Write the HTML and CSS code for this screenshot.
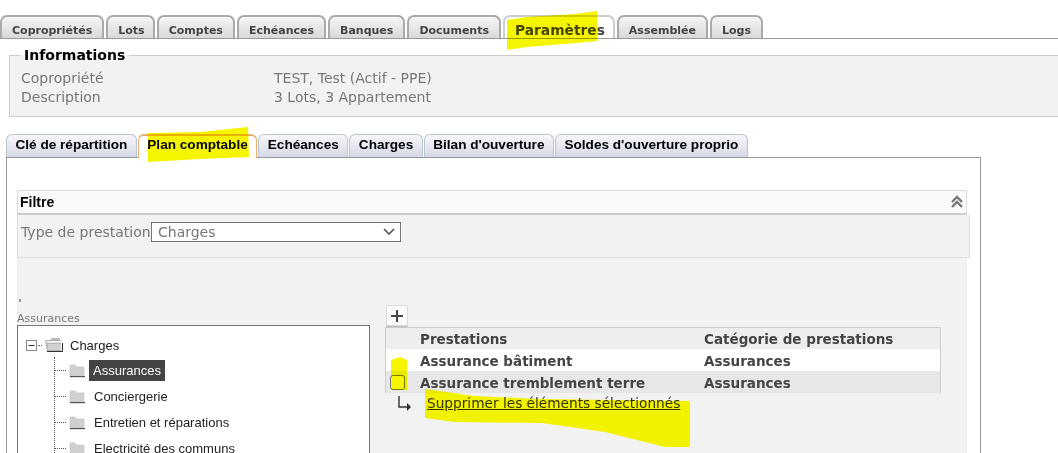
FILE: index.html
```html
<!DOCTYPE html>
<html lang="fr">
<head>
<meta charset="utf-8">
<title>Paramètres</title>
<link rel="stylesheet" href="styles.css">
</head>
<body>
<nav class="main-tabs">
  <a class="mt">Copropriétés</a>
  <a class="mt mt-short">Lots</a>
  <a class="mt">Comptes</a>
  <a class="mt">Echéances</a>
  <a class="mt">Banques</a>
  <a class="mt">Documents</a>
  <a class="mt mt-active">Paramètres</a>
  <a class="mt">Assemblée</a>
  <a class="mt">Logs</a>
</nav>
<fieldset class="info">
  <legend>Informations</legend>
  <div class="info-row"><span class="info-key">Copropriété</span><span>TEST, Test (Actif - PPE)</span></div>
  <div class="info-row"><span class="info-key">Description</span><span>3 Lots, 3 Appartement</span></div>
</fieldset>
<nav class="sub-tabs">
  <a class="st">Clé de répartition</a>
  <a class="st st-active">Plan comptable</a>
  <a class="st">Echéances</a>
  <a class="st">Charges</a>
  <a class="st">Bilan d'ouverture</a>
  <a class="st">Soldes d'ouverture proprio</a>
</nav>
<main class="panel">
  <div class="filter-head">
    <span>Filtre</span>
    <svg class="chev" width="14" height="14" viewBox="0 0 14 14"><path d="M2 7l5-5 5 5M2 12l5-5 5 5" fill="none" stroke="#777" stroke-width="2.4"/></svg>
  </div>
  <div class="filter-body">
    <label class="filter-label">Type de prestation</label>
    <div class="select"><span>Charges</span>
      <svg width="12" height="8" viewBox="0 0 12 8"><path d="M1 1l5 5 5-5" fill="none" stroke="#555" stroke-width="1.6"/></svg>
    </div>
  </div>
  <div class="work">
    <div class="dot"></div>
    <div class="columns">
      <section class="tree-col">
        <div class="tree-label">Assurances</div>
        <div class="tree">
          <div class="node root">
            <svg class="expander" width="11" height="11" viewBox="0 0 11 11"><rect x=".5" y=".5" width="10" height="10" fill="#fff" stroke="#888"/><path d="M2.5 5.5h6" stroke="#333"/></svg>
            <span class="root-dash"></span>
            <svg class="open-folder" width="20" height="16" viewBox="0 0 20 16"><path d="M1 3h5l2-2h7l2 3v10H3z" fill="#b5b5b5"/><path d="M1 4h16v2H4z" fill="#eee"/><path d="M3 14h15V6h1v9H3z" fill="#333"/><path d="M4 7h13v6H4z" fill="#d2d2d2"/></svg>
            <span class="root-name">Charges</span>
          </div>
          <ul class="children">
            <li class="node"><span class="dash"></span><svg class="folder" width="16" height="15" viewBox="0 0 16 15"><path d="M1 2h5l1 2h8v9H1z" fill="#d0d0d0" stroke="#c0c0c0" stroke-width=".6"/><path d="M1 13h15v1.2H1z" fill="#555"/></svg><span class="name selected">Assurances</span></li>
            <li class="node"><span class="dash"></span><svg class="folder" width="16" height="15" viewBox="0 0 16 15"><path d="M1 2h5l1 2h8v9H1z" fill="#d0d0d0" stroke="#c0c0c0" stroke-width=".6"/><path d="M1 13h15v1.2H1z" fill="#555"/></svg><span class="name">Conciergerie</span></li>
            <li class="node"><span class="dash"></span><svg class="folder" width="16" height="15" viewBox="0 0 16 15"><path d="M1 2h5l1 2h8v9H1z" fill="#d0d0d0" stroke="#c0c0c0" stroke-width=".6"/><path d="M1 13h15v1.2H1z" fill="#555"/></svg><span class="name">Entretien et réparations</span></li>
            <li class="node"><span class="dash"></span><svg class="folder" width="16" height="15" viewBox="0 0 16 15"><path d="M1 2h5l1 2h8v9H1z" fill="#d0d0d0" stroke="#c0c0c0" stroke-width=".6"/><path d="M1 13h15v1.2H1z" fill="#555"/></svg><span class="name">Electricité des communs</span></li>
          </ul>
        </div>
      </section>
      <section class="list-col">
        <button class="add"><svg width="14" height="14" viewBox="0 0 14 14"><path d="M7 1v12M1 7h12" stroke="#444" stroke-width="2"/></svg></button>
        <div class="grid">
          <div class="grow ghead"><span class="gcheck"></span><span class="gc1">Prestations</span><span>Catégorie de prestations</span></div>
          <div class="grow gwhite"><span class="gcheck"></span><span class="gc1">Assurance bâtiment</span><span>Assurances</span></div>
          <div class="grow ggrey"><span class="gcheck"><span class="box"></span></span><span class="gc1">Assurance tremblement terre</span><span>Assurances</span></div>
        </div>
        <div class="actions">
          <svg width="16" height="18" viewBox="0 0 16 18"><path d="M2 1v11h9" fill="none" stroke="#333" stroke-width="1.4"/><path d="M10 8l4 4-4 4z" fill="#333"/></svg>
          <a class="del">Supprimer les éléments sélectionnés</a>
        </div>
      </section>
    </div>
  </div>
</main>
<svg class="marker" width="1058" height="453" viewBox="0 0 1058 453">
  <path d="M507 20L527 17 575 14 597 11V41L577 43 527 47 507 50z"/>
  <path d="M148 133L200 132 248 127 249 157 200 159 148 162z"/>
  <path d="M391 360L400 357 407 360V390H391z"/>
  <path d="M425 389L475 396 538 399 690 401V447H665L605 432 542 423 455 422 425 418z"/>
</svg>
</body>
</html>
```
FILE: styles.css
```css
* { box-sizing: border-box; }
html, body { margin: 0; height: 453px; overflow: hidden; background: #fff; }
body { font-family: "DejaVu Sans", Verdana, sans-serif; color: #777; position: relative; }

.main-tabs { display: flex; gap: 2px; height: 39px; padding-top: 15px; border-bottom: 1px solid #999; }
.mt { height: 23px; padding: 7px 10px 0; font-size: 11px; font-weight: 700; line-height: 14px; color: #444; white-space: nowrap;
  border: 2px solid #aaa; border-bottom: 0; border-radius: 7px 7px 0 0; background: linear-gradient(#f5f5f5, #d9d9d9); }
.mt-short { padding-right: 8px; }
.mt-active { padding: 4px 8px 0 10px; font-size: 13.8px; line-height: 18px; background: #fff; border-color: #ccc; }

.info { margin: 8px 0 0 9px; padding: 0 11px; height: 70px; width: 1060px; border: 1px solid #ccc; background: #f2f2f2; font-size: 14px; }
.info legend { padding: 0 4px; margin-left: -1px; font-size: 14px; font-weight: 700; color: #000; line-height: 16px; }
.info-row { display: flex; height: 19px; line-height: 19px; position: relative; top: 6px; }
.info-key { width: 253px; }

.sub-tabs { display: flex; gap: 1px; height: 23px; margin: 17px 0 0 6px; }
.st { height: 23px; padding: 2px 8.5px 0; font-family: "Liberation Sans", Arial, sans-serif; font-size: 13.6px; font-weight: 700; line-height: 16px; color: #000; white-space: nowrap;
  border: 1px solid #b9c4cc; border-bottom: 0; border-radius: 6px 6px 0 0; background: linear-gradient(#f7f7fa, #d5d8e6); }
.st-active { height: 24px; background: #fff; border-color: #e8b070; border-top-width: 2px; padding-top: 1px; position: relative; }

.panel { margin-left: 6px; width: 975px; height: 300px; padding: 32px 0 0 10px; border: 1px solid #999; border-bottom: 0; }
.filter-head { display: flex; justify-content: space-between; align-items: center; width: 950px; height: 25px; padding: 0 2px; background: #fafafa; border: 1px solid #ddd; border-bottom: 2px solid #ccc; font-family: "Liberation Sans", Arial, sans-serif; font-size: 14px; font-weight: 700; color: #000; }
.chev { margin-right: 0; }
.filter-body { display: flex; align-items: center; gap: 3px; width: 953px; height: 43px; padding: 0 0 9px 3px; background: #f2f2f2; border: 1px solid #ddd; border-top: 0; font-size: 14px; }
.filter-label { flex: none; width: 127px; white-space: nowrap; }
.select { display: flex; justify-content: space-between; align-items: center; width: 250px; height: 20px; padding: 0 5px 0 6px; background: #fff; border: 1px solid #777; }
.work { width: 950px; height: 200px; background: #f2f2f2; }
.dot { width: 2px; height: 3px; margin: 0 0 0 2px; background: #999; transform: translateY(41px); }
.columns { display: flex; padding-top: 44px; }
.tree-col { width: 368px; padding-top: 8px; }
.tree-label { font-size: 11px; line-height: 12px; color: #777; }
.tree { width: 353px; height: 130px; padding: 7px 0 0 8px; background: #fff; border: 1px solid #777; color: #222; font-family: "Liberation Sans", Arial, sans-serif; font-size: 13px; }
.node { display: flex; align-items: center; }
.root { height: 24px; }
.root-dash { width: 4px; margin: 0 2px 0 1px; border-top: 1px dotted #666; }
.root-name { margin-left: 6px; }
.children { list-style: none; margin: 0 0 0 28px; padding: 0; border-left: 1px dotted #555; }
.children .node { height: 26px; }
.dash { width: 11px; border-top: 1px dotted #555; }
.folder { margin-left: 3px; flex: none; }
.name { margin-left: 8px; padding: 0 1px; line-height: 21px; white-space: nowrap; }
.selected { margin-left: 4px; padding: 0 4px; background: #444; color: #fff; }

.list-col { width: 556px; }
.add { display: flex; align-items: center; justify-content: center; width: 22px; height: 21px; margin: 0 0 1px 1px; padding: 0; background: #fbfbfb; border: 1px solid #ddd; border-radius: 2px; box-shadow: 0 1px 0 #bbb; }
.grid { border: 1px solid #ccc; border-width: 1px 1px 0 1px; }
.grow { display: flex; align-items: center; height: 22px; font-size: 13.5px; font-weight: 700; color: #444; }
.ghead { background: #eee; height: 21px; }
.gwhite { background: #fff; padding-top: 2px; }
.ggrey { background: #e7e7e7; padding-top: 2px; }
.gcheck { display: flex; justify-content: center; width: 34px; padding-right: 11px; }
.gc1 { width: 284px; }
.box { display: block; width: 15px; height: 15px; margin-top: -2px; border: 1px solid #777; border-radius: 3px; background: #fff; }
.actions { display: flex; align-items: flex-start; gap: 14px; padding: 2px 0 0 12px; }
.del { font-size: 13.7px; line-height: 17px; color: #333; text-decoration: underline; }

.marker { position: absolute; left: 0; top: 0; pointer-events: none; mix-blend-mode: darken; fill: #f5f500; }
```
